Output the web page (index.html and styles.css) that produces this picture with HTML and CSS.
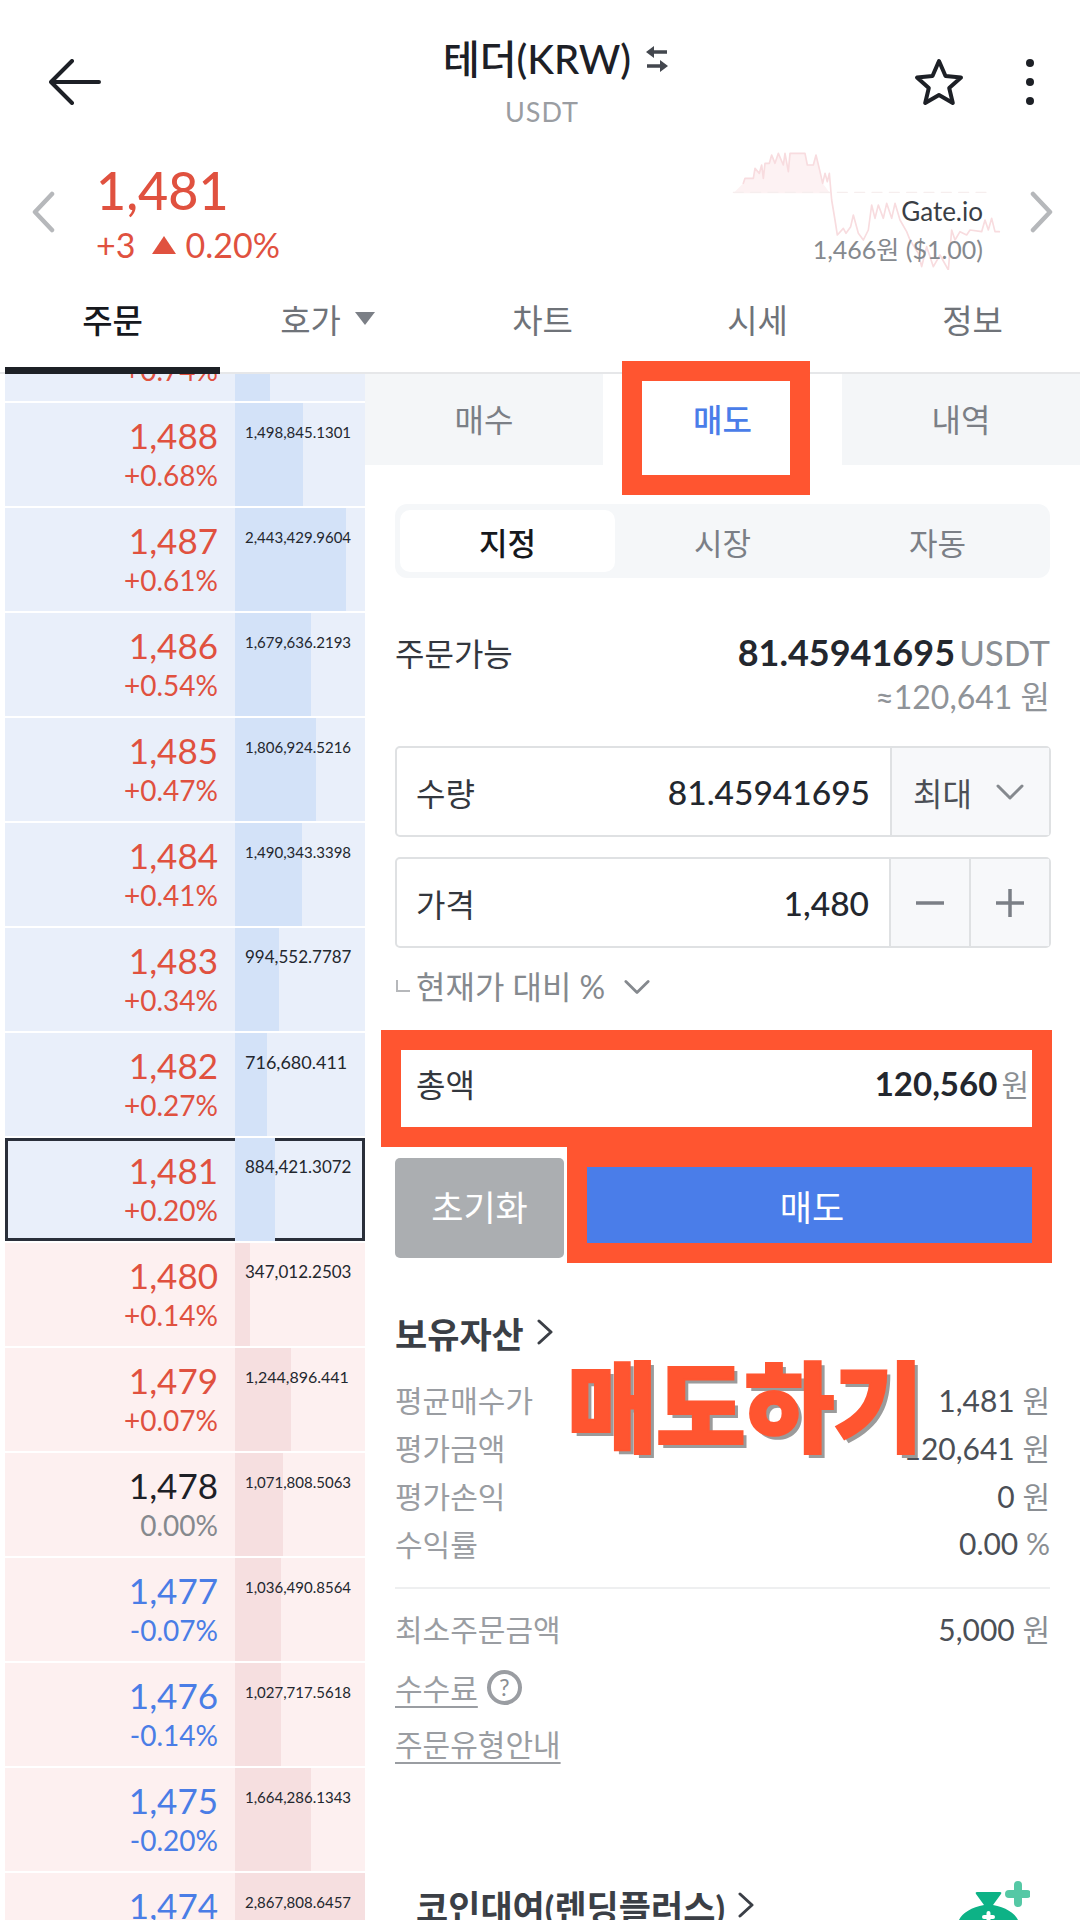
FILE: index.html
```html
<!DOCTYPE html>
<html lang="ko">
<head>
    <meta charset="UTF-8">
    <meta name="viewport" content="width=device-width, initial-scale=1.0">
    <title>테더(KRW) 매도</title>
    <link rel="stylesheet" href="styles.css">
</head>
<body>
    <header class="top-bar">
        <svg class="back-icon" width="52" height="46" viewBox="0 0 52 46"><path d="M50 23H3M23 2L2 23l21 21"/></svg>
        <div class="title-block">
            <div class="title-line">
                <span class="title">테더(KRW)</span>
                <svg class="swap-icon" width="24" height="28" viewBox="0 0 24 28"><path d="M8 7h14M2 21h14"/><path class="swap-head" d="M1 7l8-6v12zM23 21l-8-6v12z"/></svg>
            </div>
            <div class="symbol">USDT</div>
        </div>
        <div class="top-actions">
            <svg class="star-icon" width="50" height="48" viewBox="0 0 50 48"><polygon points="25,3 31.500,18 47,19.500 35.200,30 38.800,45 25,37 11.200,45 14.800,30 3,19.500 18.500,18"/></svg>
            <div class="more-dots"><i></i><i></i><i></i></div>
        </div>
    </header>

    <section class="quote">
        <svg class="quote-arrow" width="24" height="42" viewBox="0 0 24 42"><path d="M21 3L4 21l17 18"/></svg>
        <div class="quote-main">
            <div class="quote-price">1,481</div>
            <div class="quote-change"><span>+3</span><i class="tri-up"></i><span>0.20%</span></div>
        </div>
        <div class="quote-side">
            <svg class="spark" width="360" height="130" viewBox="0 0 1080 390">
                <polygon class="spark-fill" points="40,160 70,130 75,115 100,115 105,85 118,100 125,75 130,115 135,70 148,70 155,45 165,70 175,40 190,75 195,40 205,95 210,40 255,40 262,75 280,75 288,45 300,95 308,130 330,160"/>
                <line class="spark-base" x1="40" y1="157" x2="810" y2="157"/>
                <polyline class="spark-line" points="70,130 75,115 100,115 105,85 118,100 125,75 130,115 135,70 148,70 155,45 165,70 175,40 190,75 195,40 205,95 210,40 255,40 262,75 280,75 288,45 300,95 308,130 315,100 322,125 328,100 335,180 345,240 352,285 370,265 378,280 392,260 400,225 415,280 430,300 445,270 455,195 465,235 475,195 490,235 500,190 515,235 525,190 540,240 560,275 570,300 595,340 605,380 620,320 640,380 660,345 685,390 695,270 705,300 720,275 740,285 750,270 785,275 795,240 805,270 815,235 825,275 838,275"/>
            </svg>
            <div class="side-name">Gate.io</div>
            <div class="side-price">1,466원 ($1.00)</div>
        </div>
        <svg class="quote-arrow" width="24" height="42" viewBox="0 0 24 42"><path d="M3 3l17 18L3 39"/></svg>
    </section>

    <nav class="main-tabs">
        <a class="main-tab active">주문</a>
        <a class="main-tab">호가<i class="tri-down"></i></a>
        <a class="main-tab">차트</a>
        <a class="main-tab">시세</a>
        <a class="main-tab">정보</a>
    </nav>

    <main class="content">
        <div class="book">
            <ul class="book-list">
                <li class="row row-cut ask"><div class="row-price up"><span>+0.74%</span></div><div class="row-vol"><i class="vol-bar" style="width:35px"></i></div></li>
                <li class="row ask"><div class="row-price up"><b>1,488</b><span>+0.68%</span></div><div class="row-vol"><i class="vol-bar" style="width:68px"></i><span class="vol-text len-14">1,498,845.1301</span></div></li>
                <li class="row ask"><div class="row-price up"><b>1,487</b><span>+0.61%</span></div><div class="row-vol"><i class="vol-bar" style="width:111px"></i><span class="vol-text len-14">2,443,429.9604</span></div></li>
                <li class="row ask"><div class="row-price up"><b>1,486</b><span>+0.54%</span></div><div class="row-vol"><i class="vol-bar" style="width:76px"></i><span class="vol-text len-14">1,679,636.2193</span></div></li>
                <li class="row ask"><div class="row-price up"><b>1,485</b><span>+0.47%</span></div><div class="row-vol"><i class="vol-bar" style="width:81px"></i><span class="vol-text len-14">1,806,924.5216</span></div></li>
                <li class="row ask"><div class="row-price up"><b>1,484</b><span>+0.41%</span></div><div class="row-vol"><i class="vol-bar" style="width:67px"></i><span class="vol-text len-14">1,490,343.3398</span></div></li>
                <li class="row ask"><div class="row-price up"><b>1,483</b><span>+0.34%</span></div><div class="row-vol"><i class="vol-bar" style="width:44px"></i><span class="vol-text len-12">994,552.7787</span></div></li>
                <li class="row ask"><div class="row-price up"><b>1,482</b><span>+0.27%</span></div><div class="row-vol"><i class="vol-bar" style="width:32px"></i><span class="vol-text len-11">716,680.411</span></div></li>
                <li class="row ask current"><div class="row-price up"><b>1,481</b><span>+0.20%</span></div><div class="row-vol"><i class="vol-bar" style="width:40px"></i><span class="vol-text len-12">884,421.3072</span></div></li>
                <li class="row bid"><div class="row-price up"><b>1,480</b><span>+0.14%</span></div><div class="row-vol"><i class="vol-bar" style="width:15px"></i><span class="vol-text len-12">347,012.2503</span></div></li>
                <li class="row bid"><div class="row-price up"><b>1,479</b><span>+0.07%</span></div><div class="row-vol"><i class="vol-bar" style="width:56px"></i><span class="vol-text len-13">1,244,896.441</span></div></li>
                <li class="row bid"><div class="row-price flat"><b>1,478</b><span>0.00%</span></div><div class="row-vol"><i class="vol-bar" style="width:48px"></i><span class="vol-text len-14">1,071,808.5063</span></div></li>
                <li class="row bid"><div class="row-price down"><b>1,477</b><span>-0.07%</span></div><div class="row-vol"><i class="vol-bar" style="width:46px"></i><span class="vol-text len-14">1,036,490.8564</span></div></li>
                <li class="row bid"><div class="row-price down"><b>1,476</b><span>-0.14%</span></div><div class="row-vol"><i class="vol-bar" style="width:46px"></i><span class="vol-text len-14">1,027,717.5618</span></div></li>
                <li class="row bid"><div class="row-price down"><b>1,475</b><span>-0.20%</span></div><div class="row-vol"><i class="vol-bar" style="width:76px"></i><span class="vol-text len-14">1,664,286.1343</span></div></li>
                <li class="row bid"><div class="row-price down"><b>1,474</b></div><div class="row-vol"><i class="vol-bar" style="width:130px"></i><span class="vol-text len-14">2,867,808.6457</span></div></li>
            </ul>
        </div>

        <div class="order">
            <div class="order-tabs">
                <a class="order-tab">매수</a>
                <a class="order-tab active">매도</a>
                <a class="order-tab">내역</a>
            </div>
            <div class="panel">
                <div class="segment">
                    <a class="segment-item active">지정</a>
                    <a class="segment-item">시장</a>
                    <a class="segment-item">자동</a>
                </div>

                <div class="avail">
                    <span class="avail-label">주문가능</span>
                    <span><b class="avail-value">81.45941695</b> <span class="avail-unit">USDT</span></span>
                </div>
                <div class="avail-sub">≈120,641 원</div>

                <div class="field">
                    <span class="field-label">수량</span>
                    <span class="field-value">81.45941695</span>
                    <div class="field-select">
                        <span>최대</span>
                        <svg class="small-chevron" width="28" height="16" viewBox="0 0 28 16"><path d="M2 2l12 12L26 2"/></svg>
                    </div>
                </div>
                <div class="field field-price">
                    <span class="field-label">가격</span>
                    <span class="field-value">1,480</span>
                    <div class="field-step"><svg width="30" height="30" viewBox="0 0 30 30"><path d="M1 15h28"/></svg></div>
                    <div class="field-step"><svg width="30" height="30" viewBox="0 0 30 30"><path d="M1 15h28M15 1v28"/></svg></div>
                </div>

                <div class="hint">
                    <span class="hint-corner"></span>
                    <span>현재가 대비 %</span>
                    <svg class="small-chevron" width="26" height="16" viewBox="0 0 28 16"><path d="M2 2l12 12L26 2"/></svg>
                </div>

                <div class="total">
                    <span class="field-label">총액</span>
                    <span><b class="total-value">120,560</b> <span class="total-unit">원</span></span>
                </div>

                <div class="actions">
                    <button class="btn-reset">초기화</button>
                    <button class="btn-sell">매도</button>
                </div>

                <h3 class="section-title">보유자산 <svg class="title-chevron" width="18" height="26" viewBox="0 0 18 26"><path d="M3 2l12 11L3 24"/></svg></h3>
                <dl class="stats">
                    <div class="stat"><dt>평균매수가</dt><dd>1,481 <span>원</span></dd></div>
                    <div class="stat"><dt>평가금액</dt><dd>120,641 <span>원</span></dd></div>
                    <div class="stat"><dt>평가손익</dt><dd>0 <span>원</span></dd></div>
                    <div class="stat"><dt>수익률</dt><dd>0.00 <span>%</span></dd></div>
                </dl>
                <hr class="divider">
                <div class="stat stat-min"><span class="stat-name">최소주문금액</span><span class="stat-value">5,000 <span>원</span></span></div>
                <div class="link-row"><a class="link">수수료</a><span class="help-icon">?</span></div>
                <div class="link-row link-row-last"><a class="link">주문유형안내</a></div>

                <div class="lending">
                    <h3 class="section-title">코인대여(렌딩플러스) <svg class="title-chevron" width="18" height="26" viewBox="0 0 18 26"><path d="M3 2l12 11L3 24"/></svg></h3>
                    <svg class="bag-icon" width="75" height="40" viewBox="0 0 75 40">
                        <path class="bag-plus" d="M63 5v18M54 14h18"/>
                        <path class="bag-body" d="M22 12h23q2 0 1 2L38 25c12 2 22 8 25 15H4c3-7 13-13 25-15L21 14q-1-2 1-2z"/>
                        <path class="bag-mark" d="M33.500 33v7M29 37h9"/>
                    </svg>
                </div>
            </div>
        </div>
    </main>

    <!-- annotations drawn over the screen -->
    <div class="mark mark-tab"></div>
    <div class="mark mark-total"></div>
    <div class="mark mark-button"></div>
    <div class="caption">매도하기</div>
</body>
</html>
```

FILE: styles.css
```css
* {
    box-sizing: border-box;
}
body {
    font-family: Lato, "Noto Sans CJK KR", sans-serif;
    background-color: #fff;
    color: #1d2026;
    position: relative;
    width: 1080px;
    height: 1920px;
    margin: 0;
    overflow: hidden;
}
svg {
    display: block;
    fill: none;
    stroke-linecap: round;
    stroke-linejoin: round;
}

/* Top bar */
.top-bar {
    display: flex;
    height: 135px;
}
.back-icon {
    margin: 59px 0 0 49px;
    stroke: #1d2026;
    stroke-width: 4;
}
.title-block {
    position: absolute;
    left: 0;
    width: 1080px;
    top: 36px;
    text-align: center;
}
.title-line {
    display: flex;
    justify-content: center;
    align-items: center;
    gap: 14px;
    margin-left: 32px;
    height: 46px;
}
.title {
    font-size: 40px;
    font-weight: 500;
    line-height: 46px;
}
.swap-icon {
    stroke: #43474e;
    stroke-width: 3.500;
    stroke-linecap: butt;
}
.swap-head {
    fill: #43474e;
    stroke: none;
}
.symbol {
    margin: 13px 0 0 4px;
    font-size: 27px;
    line-height: 34px;
    letter-spacing: 1px;
    color: #9a9da2;
}
.top-actions {
    display: flex;
    margin-left: auto;
    padding-top: 58px;
}
.star-icon {
    stroke: #1d2026;
    stroke-width: 4;
}
.more-dots {
    display: flex;
    flex-direction: column;
    gap: 11px;
    margin: 1px 46px 0 62px;
}
.more-dots i {
    display: block;
    width: 8px;
    height: 8px;
    border-radius: 50%;
    background-color: #1d2026;
}

/* Current price */
.quote {
    position: relative;
    display: flex;
    align-items: flex-start;
    height: 155px;
    padding: 0 26px 0 31px;
}
.quote-arrow {
    margin-top: 56px;
    flex: none;
    stroke: #b6b8bb;
    stroke-width: 4.500;
}
.quote-main {
    margin-left: 41px;
    color: #e0513f;
}
.quote-price {
    margin-top: 24px;
    font-size: 52px;
    font-weight: 500;
    line-height: 62px;
}
.quote-change {
    display: flex;
    align-items: center;
    margin-top: 4px;
    font-size: 34px;
    line-height: 40px;
}
.tri-up {
    width: 0;
    height: 0;
    margin: 0 9px 0 17px;
    border-left: 12px solid transparent;
    border-right: 12px solid transparent;
    border-bottom: 18px solid #e0513f;
}
.quote-side {
    margin-left: auto;
    margin-right: 47px;
    padding-top: 58px;
    text-align: right;
}
.spark {
    position: absolute;
    left: 720px;
    top: 5px;
    z-index: -1;
}
.spark-fill {
    fill: #fdf2f3;
}
.spark-line {
    stroke: #f8dcdf;
    stroke-width: 5;
}
.spark-base {
    stroke: #f6eeee;
    stroke-width: 4;
    stroke-dasharray: 30 22;
}
.side-name {
    font-size: 26px;
    line-height: 36px;
    color: #3a3e45;
}
.side-price {
    margin-top: 2px;
    font-size: 25px;
    line-height: 36px;
    color: #85898e;
}

/* Main tabs */
.main-tabs {
    display: grid;
    grid-template-columns: repeat(5, 215px);
    height: 84px;
    padding-left: 5px;
    border-bottom: 2px solid #e6e7e9;
}
.main-tab {
    display: flex;
    justify-content: center;
    align-items: center;
    height: 84px;
    padding-bottom: 27px;
    font-size: 33px;
    color: #6f7379;
}
.main-tab.active {
    color: #16181d;
    font-weight: 500;
    border-bottom: 7px solid #1d2026;
    padding-bottom: 20px;
}
.tri-down {
    width: 0;
    height: 0;
    margin-left: 14px;
    border-left: 10px solid transparent;
    border-right: 10px solid transparent;
    border-top: 13px solid #7b7f86;
}

/* Order book */
.content {
    display: flex;
    height: 1546px;
}
.book {
    flex: none;
    width: 365px;
    padding-left: 5px;
    overflow: hidden;
}
.book-list {
    list-style: none;
    margin: -76px 0 0;
    padding: 0;
}
.row {
    display: flex;
    height: 103px;
    margin-bottom: 2px;
}
.row.ask {
    background-color: #e9effa;
}
.row.bid {
    background-color: #fdf0f0;
}
.row.current {
    outline: 3px solid #2a2f3a;
    outline-offset: -3px;
}
.row-price {
    flex: none;
    width: 230px;
    padding: 12px 17px 0 0;
    text-align: right;
}
.row-price b {
    display: block;
    font-size: 35px;
    font-weight: 400;
    line-height: 40px;
}
.row-price span {
    display: block;
    font-size: 28px;
    line-height: 40px;
}
.row-cut .row-price {
    padding-top: 52px;
}
.row-price.up {
    color: #e0513f;
}
.row-price.down {
    color: #4a7de6;
}
.row-price.flat span {
    color: #85898e;
}
.row-vol {
    position: relative;
    flex: 1;
    padding-top: 17px;
}
.vol-bar {
    position: absolute;
    left: 0;
    top: 0;
    bottom: 0;
}
.ask .vol-bar {
    background-color: #d3e2f8;
}
.bid .vol-bar {
    background-color: #f6dfe0;
}
.vol-text {
    position: relative;
    display: block;
    padding-left: 10px;
    line-height: 24px;
    white-space: nowrap;
    color: #23272e;
}
.len-14 {
    font-size: 15px;
}
.len-13 {
    font-size: 16px;
}
.len-12 {
    font-size: 17px;
}
.len-11 {
    font-size: 18px;
}

/* Buy / sell tabs */
.order {
    flex: 1;
}
.order-tabs {
    display: grid;
    grid-template-columns: 238px 239px 238px;
    height: 91px;
}
.order-tab {
    display: flex;
    justify-content: center;
    align-items: center;
    background-color: #f4f6f8;
    font-size: 32px;
    padding-bottom: 4px;
    color: #7b7f86;
}
.order-tab.active {
    background-color: #fff;
    color: #4a7de9;
    font-weight: 500;
}
.panel {
    padding: 39px 30px 0;
}
.segment {
    display: grid;
    grid-template-columns: repeat(3, 1fr);
    height: 74px;
    padding: 6px 5px;
    border-radius: 12px;
    background-color: #f5f7f9;
}
.segment-item {
    display: flex;
    justify-content: center;
    align-items: center;
    border-radius: 10px;
    font-size: 31px;
    color: #7b7f86;
}
.segment-item.active {
    background-color: #fff;
    color: #16181d;
    font-weight: 500;
}

/* Available balance */
.avail {
    display: flex;
    justify-content: space-between;
    align-items: center;
    height: 42px;
    margin-top: 53px;
}
.avail-label {
    font-size: 32px;
    color: #33373e;
}
.avail-value {
    font-size: 36px;
    font-weight: 700;
    color: #23272e;
}
.avail-unit {
    font-size: 35px;
    color: #8a8e93;
}
.avail-sub {
    margin-top: 4px;
    text-align: right;
    font-size: 32px;
    line-height: 40px;
    color: #8f9398;
}

/* Inputs */
.field {
    display: flex;
    align-items: center;
    height: 91px;
    margin: 29px -1px 0 0;
    padding-left: 19px;
    border: 2px solid #dfe1e3;
    border-radius: 5px;
}
.field-price {
    margin-top: 20px;
}
.field-label {
    font-size: 32px;
    color: #33373e;
}
.field-value {
    margin-left: auto;
    padding-right: 20px;
    font-size: 33.500px;
    font-weight: 500;
    color: #23272e;
}
.field-select {
    display: flex;
    justify-content: space-between;
    align-items: center;
    flex: none;
    width: 159px;
    height: 100%;
    padding: 0 25px 0 21px;
    border-left: 2px solid #dfe1e3;
    background-color: #f7f8fa;
    font-size: 32px;
    color: #4b4f56;
}
.small-chevron {
    stroke: #85898e;
    stroke-width: 3;
}
.field-step {
    display: flex;
    justify-content: center;
    align-items: center;
    flex: none;
    width: 80px;
    height: 100%;
    border-left: 2px solid #dfe1e3;
    background-color: #f7f8fa;
}
.field-step svg {
    stroke: #7b7f86;
    stroke-width: 3.500;
    stroke-linecap: butt;
}
.hint {
    display: flex;
    align-items: center;
    gap: 6px;
    height: 40px;
    margin-top: 17px;
    font-size: 32px;
    color: #85898e;
}
.hint-corner {
    width: 14px;
    height: 12px;
    margin-top: 2px;
    margin-left: 1px;
    border-left: 2px solid #b6b8bb;
    border-bottom: 2px solid #b6b8bb;
}
.hint .small-chevron {
    margin-left: 13px;
    margin-top: 4px;
}

/* Total and buttons */
.total {
    display: flex;
    justify-content: space-between;
    align-items: center;
    height: 73px;
    margin-top: 41px;
    padding: 0 21px 0 21px;
}
.total-value {
    font-size: 33px;
    font-weight: 700;
    color: #23272e;
}
.total-unit {
    font-size: 30px;
    color: #8a8e93;
}
.actions {
    display: flex;
    gap: 16px;
    height: 100px;
    margin-top: 39px;
}
.btn-reset,
.btn-sell {
    border: none;
    padding: 0 0 6px;
    font-family: inherit;
    font-size: 35px;
    color: #fff;
}
.btn-reset {
    flex: none;
    width: 169px;
    border-radius: 5px;
    background-color: #abaeb1;
}
.btn-sell {
    flex: 1;
    padding-right: 6px;
    background-color: #4a7de9;
}

/* Holdings */
.section-title {
    display: flex;
    align-items: center;
    gap: 12px;
    height: 44px;
    margin: 52px 0 0;
    font-size: 35px;
    font-weight: 700;
    color: #3b3f46;
}
.title-chevron {
    stroke: #3b3f46;
    stroke-width: 3;
}
.stats {
    margin: 21px 0 0;
}
.stat {
    display: flex;
    justify-content: space-between;
    align-items: center;
    height: 48px;
    font-size: 30px;
}
.stat dt,
.stat-name {
    color: #9a9da2;
}
.stat dd,
.stat-value {
    margin: 0;
    font-size: 30px;
    color: #4b4f56;
}
.stat dd span,
.stat-value span {
    font-size: 30px;
    color: #8a8e93;
}
.divider {
    height: 2px;
    margin: 20px 0 0;
    border: none;
    background-color: #eeeff0;
}
.stat-min {
    margin-top: 15px;
}
.link-row {
    display: flex;
    align-items: center;
    gap: 9px;
    height: 48px;
    margin-top: 11px;
}
.link-row-last {
    margin-top: 8px;
}
.link {
    font-size: 30px;
    color: #9a9da2;
    text-decoration: underline;
    text-underline-offset: 6px;
    text-decoration-thickness: 2px;
}
.help-icon {
    width: 35px;
    height: 35px;
    border: 4px solid #9a9da2;
    border-radius: 50%;
    text-align: center;
    font-size: 23px;
    line-height: 27px;
    color: #8a8e93;
}

/* Lending banner */
.lending {
    display: flex;
    justify-content: space-between;
    margin-top: 116px;
    padding-left: 21px;
}
.lending .section-title {
    margin-top: 0;
}
.bag-icon {
    margin: -3px 20px 0 0;
}
.bag-body {
    fill: #0db286;
}
.bag-plus {
    stroke: #55c8a5;
    stroke-width: 8;
}
.bag-mark {
    stroke: #fff;
    stroke-width: 4;
}

/* Orange annotations */
.mark {
    position: absolute;
    border: 20px solid #ff5530;
}
.mark-tab {
    left: 622px;
    top: 361px;
    width: 188px;
    height: 134px;
}
.mark-total {
    left: 381px;
    top: 1030px;
    width: 671px;
    height: 117px;
}
.mark-button {
    left: 567px;
    top: 1147px;
    width: 485px;
    height: 116px;
}
.caption {
    position: absolute;
    left: 567px;
    top: 1341px;
    font-size: 98px;
    font-weight: 900;
    line-height: 130px;
    letter-spacing: -1.500px;
    white-space: nowrap;
    color: #ff5530;
    -webkit-text-stroke: 2px #ff5530;
    text-shadow: 4px 4px 0 #9b9b9b;
}
```
